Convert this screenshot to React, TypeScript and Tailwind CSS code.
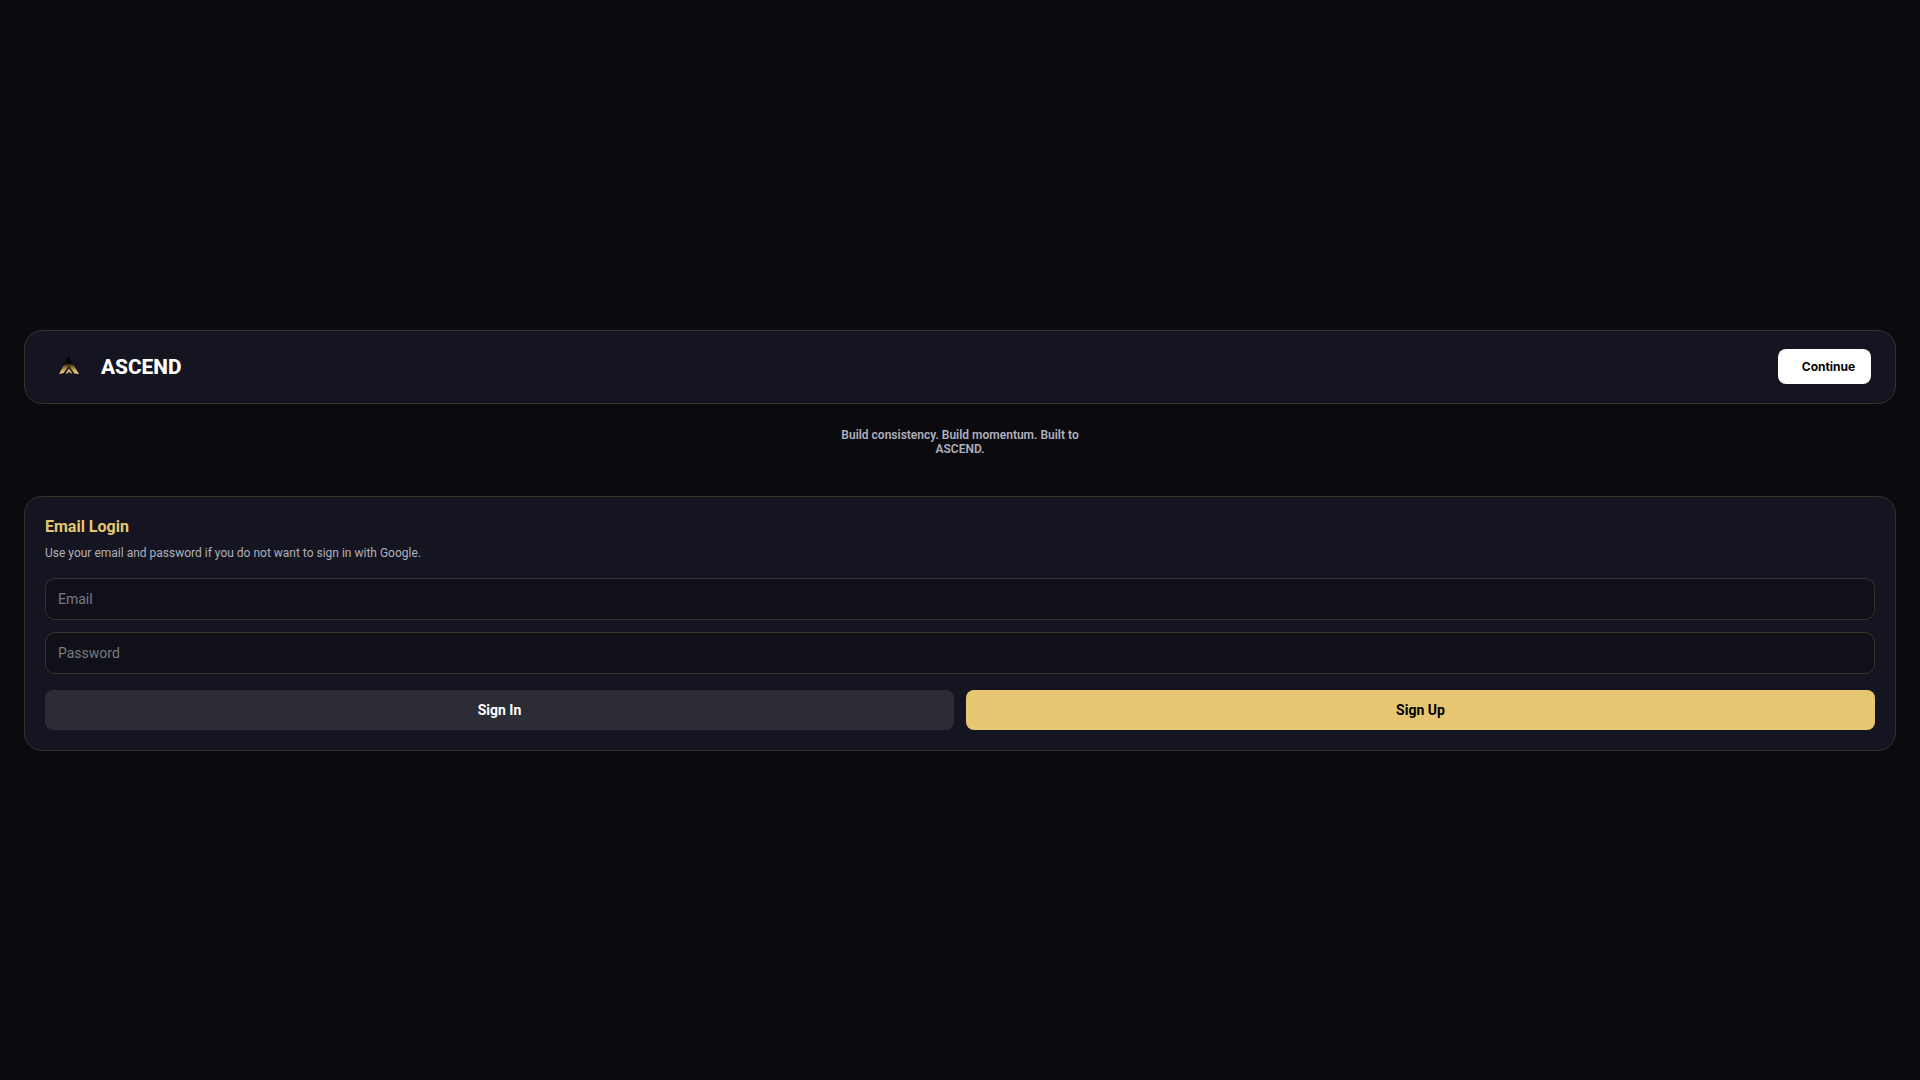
export default function App() {
  return (
    <div className="flex min-h-screen flex-col justify-center bg-[#0a0a0f] px-6 pt-px font-['Roboto',sans-serif]">
      <header className="flex h-[74px] items-center justify-between rounded-[18px] border border-[#37332c] bg-[#141520] pl-[33px] pr-[24px]">
        <div className="flex items-center gap-[19px]">
          <svg width="24" height="24" viewBox="0 0 24 24" aria-hidden="true" className="-translate-y-px">
            <defs>
              <linearGradient id="peak" gradientUnits="userSpaceOnUse" x1="0" y1="3" x2="0" y2="20">
                <stop offset="0" stopColor="#000000" />
                <stop offset="0.38" stopColor="#0d0b08" />
                <stop offset="0.6" stopColor="#8f7030" />
                <stop offset="0.82" stopColor="#d9b55f" />
                <stop offset="1" stopColor="#f5d98a" />
              </linearGradient>
            </defs>
            <path d="M10.5 2.5 L21 20 L16.5 19.5 L11 12 L5.5 19 L1 20 Z" fill="url(#peak)" />
            <path d="M11 14.5 L14.3 19.5 L12.6 19.3 L11 17.4 L9.3 19.5 L7.6 19.5 Z" fill="#e6c670" />
          </svg>
          <span className="text-[20.8px] font-extrabold leading-none text-white">ASCEND</span>
        </div>
        <button className="mb-px h-[35px] w-[93px] rounded-[8px] bg-white pl-[8px] font-['Inter',sans-serif] text-[12px] font-bold text-black">
          Continue
        </button>
      </header>

      <p className="mx-auto mt-[24px] w-[260px] text-center text-[12px] font-semibold leading-[14px] text-[#b0b0bc]">
        Build consistency. Build momentum. Built to ASCEND.
      </p>

      <section className="mt-[40px] rounded-[18px] border border-[#37332c] bg-[#141520] p-[20px]">
        <h2 className="text-[16px] font-bold leading-[20px] text-[#e6c670]">Email Login</h2>
        <p className="mt-[7px] text-[12px] leading-[18px] text-[#b0b0bc]">
          Use your email and password if you do not want to sign in with Google.
        </p>
        <div className="mt-[16px] flex flex-col gap-[12px]">
          <input
            placeholder="Email"
            className="h-[42px] w-full rounded-[10px] border border-[#37332c] bg-[#0f1018] px-[12px] text-[14px] text-white outline-none placeholder:text-[#7a7a83]"
          />
          <input
            placeholder="Password"
            className="h-[42px] w-full rounded-[10px] border border-[#37332c] bg-[#0f1018] px-[12px] text-[14px] text-white outline-none placeholder:text-[#7a7a83]"
          />
        </div>
        <div className="mt-[16px] grid grid-cols-2 gap-[12px]">
          <button className="h-[40px] rounded-[8px] bg-[#2b2c35] text-[14px] font-bold text-white">Sign In</button>
          <button className="h-[40px] rounded-[8px] bg-[#e6c670] text-[14px] font-bold text-black">Sign Up</button>
        </div>
      </section>
    </div>
  );
}
